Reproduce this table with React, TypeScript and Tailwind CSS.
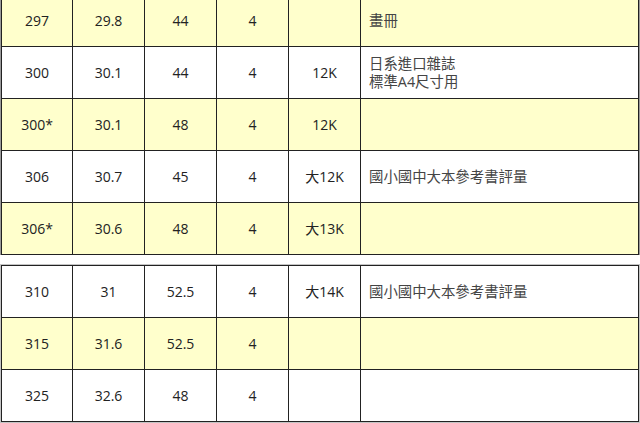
import React from 'react';

type Row = { a: string; b: string; c: string; d: string; e: string; note: string[]; yellow: boolean };

const topRows: Row[] = [
  { a: '297', b: '29.8', c: '44', d: '4', e: '', note: ['畫冊'], yellow: true },
  { a: '300', b: '30.1', c: '44', d: '4', e: '12K', note: ['日系進口雜誌', '標準A4尺寸用'], yellow: false },
  { a: '300*', b: '30.1', c: '48', d: '4', e: '12K', note: [], yellow: true },
  { a: '306', b: '30.7', c: '45', d: '4', e: '大12K', note: ['國小國中大本參考書評量'], yellow: false },
  { a: '306*', b: '30.6', c: '48', d: '4', e: '大13K', note: [], yellow: true },
];

const bottomRows: Row[] = [
  { a: '310', b: '31', c: '52.5', d: '4', e: '大14K', note: ['國小國中大本參考書評量'], yellow: false },
  { a: '315', b: '31.6', c: '52.5', d: '4', e: '', note: [], yellow: true },
  { a: '325', b: '32.6', c: '48', d: '4', e: '', note: [], yellow: false },
];

const TableRow = ({ row }: { row: Row }) => {
  const bg = row.yellow ? 'bg-[#ffffcc]' : 'bg-white';
  const cell = `h-[52px] flex items-center justify-center border-b border-r border-[#222] ${bg}`;
  return (
    <div className="grid grid-cols-[72px_72px_72px_72px_72px_1fr]">
      <div className={`${cell} border-l border-l-[#222]`}>{row.a}</div>
      <div className={cell}>{row.b}</div>
      <div className={cell}>{row.c}</div>
      <div className={cell}>{row.d}</div>
      <div className={cell}>{row.e}</div>
      <div className={`h-[52px] flex flex-col justify-center pl-2 border-b border-r border-[#222] text-[#444] text-[14.4px] leading-[18px] ${bg}`}>
        {row.note.map((n) => (
          <span key={n}>{n}</span>
        ))}
      </div>
    </div>
  );
};

export default function App() {
  return (
    <div
      className="w-[640px] h-[423px] overflow-hidden bg-white text-[14px] text-[#222]"
      style={{ fontFamily: '"Open Sans", "Noto Sans CJK TC", sans-serif' }}
    >
      <div className="-mt-[6px] border-l border-r border-[#9a9a9a]">
        <div className="border-t border-[#222]">
          {topRows.map((r) => (
            <TableRow key={r.a} row={r} />
          ))}
        </div>
      </div>
      <div className="mt-[9px] border border-[#c4c4c4]">
        <div className="border-t border-[#222]">
          {bottomRows.map((r) => (
            <TableRow key={r.a} row={r} />
          ))}
        </div>
      </div>
    </div>
  );
}
